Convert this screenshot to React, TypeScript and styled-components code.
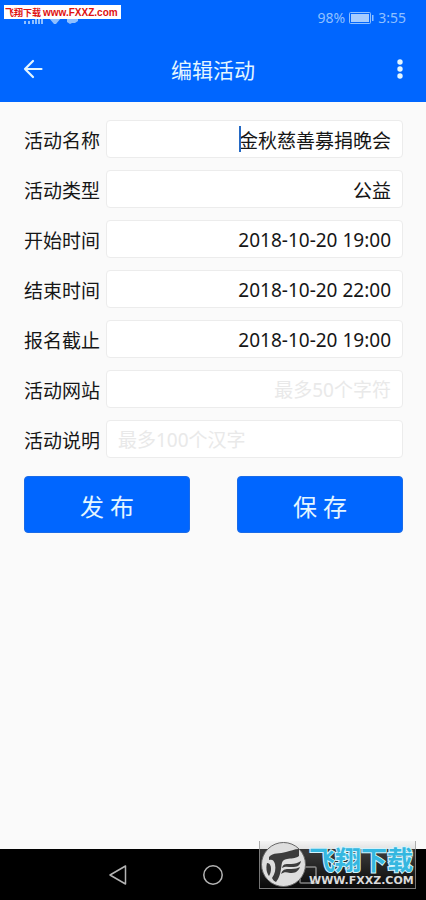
import React from "react";
import styled, { createGlobalStyle } from "styled-components";

const BLUE = "#0066ff";

const GlobalStyle = createGlobalStyle`
  *, *::before, *::after { box-sizing: border-box; }
  body {
    margin: 0;
    background: #fafafa;
    color: #161616;
    font-family: "Noto Sans", "Noto Sans CJK SC", sans-serif;
  }
  button, input, select { font: inherit; color: inherit; }
`;

const Screen = styled.div`
  display: flex;
  flex-direction: column;
  min-height: 100vh;
`;

const TopArea = styled.header`
  background: ${BLUE};
  color: #e4f6ff;
  position: relative;
`;

const StatusBar = styled.div`
  display: flex;
  align-items: center;
  height: 36px;
  padding: 0 20px 0 24px;
  color: #8fc0ff;
  font-size: 14px;
  line-height: 20px;
`;

const Signals = styled.svg`
  width: 60px;
  height: 14px;
  margin-top: 4px;
  margin-right: auto;
`;

const Battery = styled.svg`
  width: 25px;
  height: 12px;
  margin: 0 4px;
`;

const SiteTag = styled.div`
  position: absolute;
  top: 5px;
  left: 4px;
  display: flex;
  gap: 2px;
  height: 14px;
  width: 117px;
  padding-left: 1px;
  background: #fff;
  color: #e01010;
  font-size: 9px;
  font-weight: 700;
  line-height: 15px;
  white-space: nowrap;
`;

const TagUrl = styled.span`
  font-family: "Liberation Sans", sans-serif;
  font-size: 10px;
`;

const TitleBar = styled.div`
  display: grid;
  grid-template-columns: 48px 1fr 48px;
  align-items: center;
  height: 66px;
  padding: 0 9px;
`;

const Title = styled.h1`
  margin: 0;
  padding-top: 2px;
  text-align: center;
  font-size: 21px;
  font-weight: 400;
  line-height: 32px;
`;

const IconButton = styled.button<{ $edge?: boolean }>`
  display: flex;
  align-items: center;
  justify-content: ${(p) => (p.$edge ? "flex-end" : "center")};
  height: 48px;
  padding: ${(p) => (p.$edge ? "0 14px" : "0")};
  border: 0;
  background: none;
`;

const Form = styled.form`
  flex: 1;
  display: flex;
  flex-direction: column;
  gap: 12px;
  padding: 18px 23px 24px 24px;
  font-size: 19px;
`;

const Row = styled.div`
  display: flex;
  align-items: center;
  gap: 5px;
  height: 38px;
`;

const Label = styled.label`
  flex: none;
  width: 77px;
  padding-top: 3px;
  line-height: 28px;
  white-space: nowrap;
`;

const FieldBox = styled.div`
  position: relative;
  flex: 1;
  min-width: 0;
  display: flex;
  height: 38px;
  border: 1px solid #ececec;
  border-radius: 4px;
  background: #fff;
`;

const Input = styled.input<{ $align: "left" | "right" }>`
  width: 100%;
  min-width: 0;
  padding: 2px 11px 0;
  border: 0;
  outline: 0;
  background: none;
  text-align: ${(p) => p.$align};
  &::placeholder { color: #e9e9e9; opacity: 1; }
`;

const Select = styled.select`
  width: 100%;
  padding: 3px 11px 0;
  border: 0;
  outline: 0;
  background: none;
  appearance: none;
  text-align: right;
  text-align-last: right;
`;

const Caret = styled.span`
  position: absolute;
  top: 5px;
  right: 161px;
  width: 2px;
  height: 26px;
  background: #2469c4;
`;

const Actions = styled.div`
  display: grid;
  grid-template-columns: 1fr 1fr;
  gap: 47px;
  padding-top: 6px;
`;

const ActionButton = styled.button`
  height: 57px;
  padding: 2px 0 0;
  border: 1px solid #1a6be8;
  border-radius: 4px;
  background: ${BLUE};
  color: #e4f6ff;
  font-size: 24px;
`;

const NavBar = styled.nav`
  position: relative;
  display: grid;
  grid-template-columns: 1fr 1fr 1fr;
  align-items: center;
  justify-items: center;
  height: 51px;
  padding: 0 71px;
  background: #000;
`;

const Watermark = styled.div`
  position: absolute;
  right: 10px;
  bottom: 11px;
  display: flex;
  gap: 2px;
  width: 157px;
  height: 48px;
  border: 1px solid rgba(150, 150, 150, 0.75);
  border-top: 0;
  background: linear-gradient(rgba(225, 225, 225, 0.2), rgba(160, 160, 160, 0.35) 25%, rgba(60, 60, 60, 0.15));
`;

const Emblem = styled.svg`
  flex: none;
  width: 47px;
  height: 47px;
`;

const MarkText = styled.div`
  display: flex;
  flex-direction: column;
  gap: 2px;
  padding-top: 5px;
  white-space: nowrap;
`;

const MarkName = styled.span`
  color: #35b7e0;
  font-family: "Noto Sans CJK SC", sans-serif;
  font-size: 26px;
  font-weight: 700;
  line-height: 26px;
  -webkit-text-stroke: 2px #d4f3fc;
  paint-order: stroke fill;
`;

const MarkUrl = styled.span`
  color: #dcdcdc;
  font-family: "DejaVu Sans", sans-serif;
  font-size: 11px;
  font-weight: 700;
  line-height: 14px;
`;

type FieldData = {
  id: string;
  label: string;
  value?: string;
  placeholder?: string;
  align?: "left" | "right";
  options?: string[];
  focused?: boolean;
};

const fields: FieldData[] = [
  { id: "name", label: "活动名称", value: "金秋慈善募捐晚会", focused: true },
  { id: "type", label: "活动类型", options: ["公益"] },
  { id: "start", label: "开始时间", value: "2018-10-20 19:00" },
  { id: "end", label: "结束时间", value: "2018-10-20 22:00" },
  { id: "deadline", label: "报名截止", value: "2018-10-20 19:00" },
  { id: "site", label: "活动网站", placeholder: "最多50个字符" },
  { id: "about", label: "活动说明", placeholder: "最多100个汉字", align: "left" },
];

function Field({ id, label, value, placeholder, align = "right", options, focused }: FieldData) {
  return (
    <Row>
      <Label htmlFor={id}>{label}</Label>
      <FieldBox>
        {options ? (
          <Select id={id}>
            {options.map((o) => (
              <option key={o}>{o}</option>
            ))}
          </Select>
        ) : (
          <Input id={id} type="text" defaultValue={value} placeholder={placeholder} $align={align} />
        )}
        {focused && <Caret />}
      </FieldBox>
    </Row>
  );
}

export default function App() {
  return (
    <Screen>
      <GlobalStyle />
      <TopArea>
        <StatusBar>
          <Signals viewBox="0 0 60 14" fill="#8fc0ff" aria-hidden="true">
            <path d="M0 8h2v3H0zM4 8h2v3H4zM8 7h2v4H8zM11 5h2v6h-2zM14 2h2v9h-2zM17 0h2v11h-2z" />
            <path d="M25 5q6-5 12 0l-5 6h-2zM43 5h11v3l-3 2h-3l-2 1-3-2z" />
          </Signals>
          <span>98%</span>
          <Battery viewBox="0 0 25 12" aria-hidden="true">
            <rect x="0.5" y="0.5" width="21" height="11" rx="1" fill="none" stroke="#8fc0ff" />
            <rect x="2" y="2" width="18" height="8" fill="#a5ccff" />
            <path d="M23 3h1.500v6H23z" fill="#8fc0ff" />
          </Battery>
          <span>3:55</span>
        </StatusBar>
        <SiteTag>
          <span>飞翔下载</span>
          <TagUrl>www.FXXZ.com</TagUrl>
        </SiteTag>
        <TitleBar>
          <IconButton type="button" aria-label="返回">
            <svg width="20" height="20" viewBox="0 0 20 20" fill="none" stroke="#e4f6ff" strokeWidth="2.200" strokeLinecap="round" strokeLinejoin="round">
              <path d="M18.500 10H2M10 2L2 10l8 8" />
            </svg>
          </IconButton>
          <Title>编辑活动</Title>
          <IconButton type="button" aria-label="更多" $edge>
            <svg width="6" height="22" viewBox="0 0 6 22" fill="#e4f6ff">
              <circle cx="3" cy="4" r="2.700" />
              <circle cx="3" cy="11" r="2.700" />
              <circle cx="3" cy="18" r="2.700" />
            </svg>
          </IconButton>
        </TitleBar>
      </TopArea>
      <Form onSubmit={(e) => e.preventDefault()}>
        {fields.map((f) => (
          <Field key={f.id} {...f} />
        ))}
        <Actions>
          <ActionButton type="submit">发 布</ActionButton>
          <ActionButton type="button">保 存</ActionButton>
        </Actions>
      </Form>
      <NavBar>
        <IconButton type="button" aria-label="后退">
          <svg width="20" height="22" viewBox="0 0 20 22" fill="none" stroke="#b4b4b4" strokeWidth="1.500" strokeLinejoin="round">
            <path d="M2 11L17.500 2v18z" />
          </svg>
        </IconButton>
        <IconButton type="button" aria-label="主屏幕">
          <svg width="22" height="22" viewBox="0 0 22 22" fill="none" stroke="#b4b4b4" strokeWidth="1.500">
            <circle cx="11" cy="11" r="9.200" />
          </svg>
        </IconButton>
        <IconButton type="button" aria-label="最近任务">
          <svg width="20" height="20" viewBox="0 0 20 20" fill="none" stroke="#8a8a8a" strokeWidth="1.500">
            <rect x="2" y="2" width="16" height="16" rx="1" />
          </svg>
        </IconButton>
        <Watermark>
          <Emblem viewBox="0 0 47 47" aria-hidden="true">
            <circle cx="23.500" cy="23.500" r="22" fill="#dedede" stroke="#666" />
            <path d="M9 16C13 11 20 13 26 11C31 10 34 8 39 8V15C35 18 31 17 27 18C21 19 22 23 21 28C20 34 19 37 16 41C14 40 13 39 12 37C15 33 16 28 15 23C14 19 12 18 9 19Z" fill="#3c3c3c" />
            <path d="M7 22C10 22 11 25 11 28C11 31 10 33 9 35C6 31 6 26 7 22Z" fill="#3c3c3c" />
            <path d="M22 27C23 22 27 23 31 23C35 23 38 22 41 20C40 25 37 26 32 26C28 26 25 25 22 27Z" fill="#3c3c3c" />
            <path d="M21 33C23 27 27 28 31 28C35 28 38 27 40 26C38 31 35 32 30 32C26 31 24 31 21 33Z" fill="#3c3c3c" />
          </Emblem>
          <MarkText>
            <MarkName>飞翔下载</MarkName>
            <MarkUrl>WWW.FXXZ.COM</MarkUrl>
          </MarkText>
        </Watermark>
      </NavBar>
    </Screen>
  );
}
